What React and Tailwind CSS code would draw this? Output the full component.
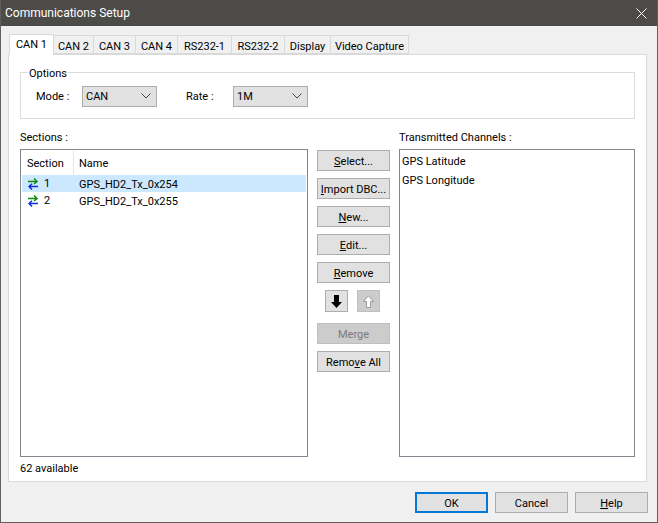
import React from 'react';

const tabs = [
  ['CAN 1', 'w-[45px]'],
  ['CAN 2', 'w-[41px]'],
  ['CAN 3', 'w-[43px]'],
  ['CAN 4', 'w-[43px]'],
  ['RS232-1', 'w-[55px]'],
  ['RS232-2', 'w-[54px]'],
  ['Display', 'w-[47px]'],
  ['Video Capture', 'w-[79px]'],
];

const SwapIcon = () => (
  <svg width="10" height="12" viewBox="0 0 10 12" className="shrink-0">
    <path d="M0 3.5H8.5M6 0.5L9 3.5L6 6" fill="none" stroke="#0e8a0e" strokeWidth="1.5" />
    <path d="M10 8.5H1.5M4 5.8L1 8.5L4 11.5" fill="none" stroke="#0f2fdc" strokeWidth="1.5" />
  </svg>
);

const Chevron = () => (
  <svg width="10" height="6" viewBox="0 0 10 6" className="shrink-0">
    <path d="M0.5 0.5L5 5L9.5 0.5" fill="none" stroke="#444" strokeWidth="1" />
  </svg>
);

const Select = ({ value }) => (
  <div className="w-[75px] h-[21px] flex items-center justify-between pl-[3px] pr-[5px] bg-[#e1e1e1] border border-[#adadad]">
    <span>{value}</span>
    <Chevron />
  </div>
);

const Btn = ({ children, className = '', disabled }) => (
  <button
    className={`w-[73px] h-[21px] pt-[2px] flex items-center justify-center border whitespace-nowrap ${
      disabled ? 'bg-[#cccccc] border-[#bfbfbf] text-[#7a7a7a]' : 'bg-[#e1e1e1] border-[#adadad]'
    } ${className}`}
  >
    {children}
  </button>
);

const rows = [
  ['1', 'GPS_HD2_Tx_0x254', true],
  ['2', 'GPS_HD2_Tx_0x255', false],
];

export default function App() {
  return (
    <div
      className="w-[658px] h-[523px] flex flex-col overflow-hidden bg-[#f0f0f0] text-[11px] leading-none text-black border-x border-b border-[#5f5f5f]"
      style={{ fontFamily: 'Roboto, "Open Sans", sans-serif' }}
    >
      {/* Title bar */}
      <div className="h-[26px] -mx-px shrink-0 flex items-center justify-between pl-[5px] pr-[11px] bg-[#4d4b48] text-white text-[12px]">
        <span>Communications Setup</span>
        <svg width="11" height="11" viewBox="0 0 11 11">
          <path d="M0.5 0.5L10.5 10.5M10.5 0.5L0.5 10.5" stroke="#fff" strokeWidth="1" />
        </svg>
      </div>

      <div className="pl-[7px] pt-[8px]">
        {/* Tabs */}
        <div className="flex items-end h-[20px] pl-px">
          {tabs.map(([label, w], i) => (
            <div
              key={label}
              className={`${w} flex items-center justify-center whitespace-nowrap border border-[#d9d9d9] -ml-px first:ml-0 ${
                i === 0 ? 'h-[21px] -mb-px bg-white border-b-0 relative z-10 pb-[2px]' : 'h-[19px] pt-[3px] bg-[#f0f0f0]'
              }`}
            >
              {label}
            </div>
          ))}
        </div>

        {/* Tab panel */}
        <div className="w-[639px] h-[428px] bg-white border border-[#d9d9d9] px-[11px] pt-[17px] flex flex-col">
          <div className="relative w-[615px] h-[47px] border border-[#dcdcdc] flex items-center pl-[15px] pt-[1px] shrink-0">
            <span className="absolute left-[7px] -top-[5px] bg-white px-px">Options</span>
            <span className="w-[46px]">Mode :</span>
            <Select value="CAN" />
            <span className="ml-[29px] w-[47px]">Rate :</span>
            <Select value="1M" />
          </div>

          <div className="flex mt-[11px]">
            {/* Sections list */}
            <div className="w-[288px] flex flex-col">
              <div className="h-[19px] leading-[15px]">Sections :</div>
              <div className="h-[308px] border border-[#82878f] p-px">
                <div className="flex h-[24px] items-center">
                  <div className="w-[52px] h-full flex items-center pl-[5px] border-r border-[#e5e5e5]">Section</div>
                  <div className="pl-[5px]">Name</div>
                </div>
                {rows.map(([n, name, sel]) => (
                  <div key={n} className={`flex items-center h-[17px] ${sel ? 'bg-[#cce8ff]' : ''}`}>
                    <div className="w-[52px] flex items-center gap-[6px] pl-[6px]">
                      <SwapIcon />
                      <span>{n}</span>
                    </div>
                    <div className="pl-[5px] pt-[2px]">{name}</div>
                  </div>
                ))}
              </div>
              <div className="h-[22px] flex items-center">62 available</div>
            </div>

            {/* Action buttons */}
            <div className="w-[73px] ml-[9px] pt-[20px] flex flex-col">
              <div className="flex flex-col gap-[7px]">
                <Btn><u>S</u>elect...</Btn>
                <Btn><u>I</u>mport DBC...</Btn>
                <Btn><u>N</u>ew...</Btn>
                <Btn><u>E</u>dit...</Btn>
                <Btn><u>R</u>emove</Btn>
              </div>
              <div className="flex gap-[9px] mt-[7px] ml-[8px]">
                <button className="w-[23px] h-[22px] flex items-center justify-center bg-[#e1e1e1] border border-[#adadad]">
                  <svg width="11" height="13" viewBox="0 0 11 13">
                    <path d="M3 0H8V7H11L5.5 13L0 7H3Z" fill="#000" />
                  </svg>
                </button>
                <button className="w-[23px] h-[22px] flex items-center justify-center bg-[#cccccc] border border-[#bfbfbf]">
                  <svg width="11" height="13" viewBox="0 0 11 13">
                    <path d="M3.5 12.5H7.5V6.5H10.5L5.5 0.8L0.5 6.5H3.5Z" fill="#fff" stroke="#9a9a9a" strokeWidth="1" />
                  </svg>
                </button>
              </div>
              <div className="flex flex-col gap-[7px] mt-[11px]">
                <Btn disabled>Merge</Btn>
                <Btn>Remo<u>v</u>e All</Btn>
              </div>
            </div>

            {/* Transmitted channels */}
            <div className="w-[236px] ml-[9px] flex flex-col">
              <div className="h-[19px] leading-[15px]">Transmitted Channels :</div>
              <div className="h-[308px] border border-[#82878f] pl-[2px] pt-[2px]">
                <div className="h-[19px] flex items-center">GPS Latitude</div>
                <div className="h-[19px] flex items-center">GPS Longitude</div>
              </div>
            </div>
          </div>
        </div>

        {/* Dialog buttons */}
        <div className="flex justify-end gap-[7px] mt-[10px] pr-[9px]">
          <Btn className="!border-2 !border-[#0078d7]">OK</Btn>
          <Btn>Cancel</Btn>
          <Btn><u>H</u>elp</Btn>
        </div>
      </div>
    </div>
  );
}
